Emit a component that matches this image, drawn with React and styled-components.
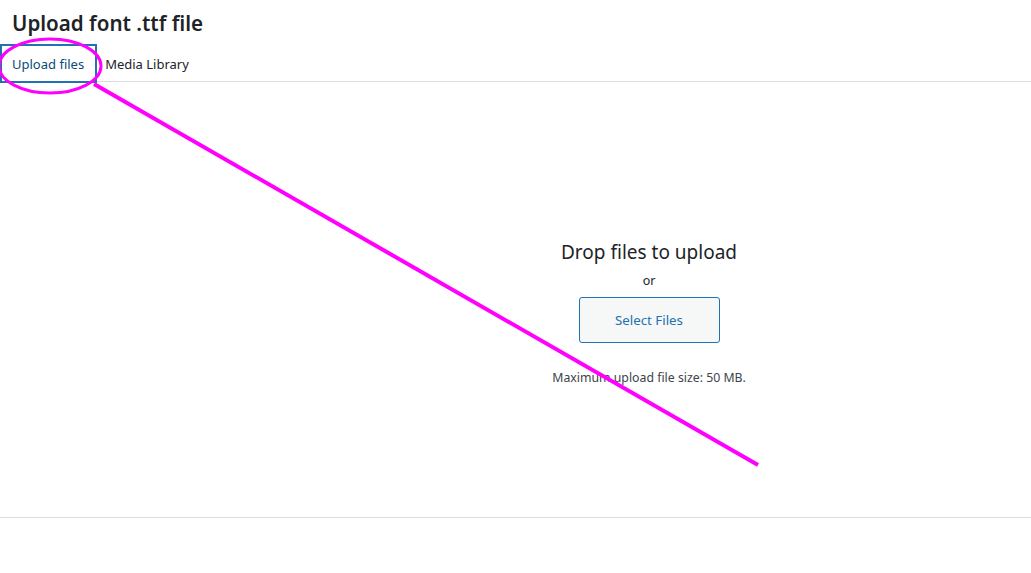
import styled, { createGlobalStyle } from "styled-components";

const Global = createGlobalStyle`
  html, body { margin: 0; padding: 0; background: #fff; }
  body { font-family: "Noto Sans", "Open Sans", sans-serif; color: #1d2327; }
`;

const Frame = styled.div`
  position: relative;
  width: 1031px;
  height: 573px;
  overflow: hidden;
  background: #fff;
`;

const Title = styled.h1`
  margin: 0;
  padding: 9px 12px 0;
  height: 35px;
  font-size: 20.6px;
  font-weight: 600;
  line-height: 28px;
  color: #1d2327;
`;

const Router = styled.nav`
  display: flex;
  align-items: flex-start;
  height: 37px;
  border-bottom: 1px solid #dcdcde;
`;

const Tab = styled.button`
  font: inherit;
  font-size: 13px;
  background: none;
  margin: 0;
  padding: 1px ${(p) => (p.$active ? "11px" : "8px")} 0 ${(p) => (p.$active ? "10px" : "6px")};
  height: 39px;
  flex-shrink: 0;
  border: ${(p) => (p.$active ? "2px solid #2271b1" : "2px solid transparent")};
  color: ${(p) => (p.$active ? "#0a4b78" : "#1d2327")};
  cursor: pointer;
`;

const Content = styled.section`
  height: 436px;
  border-bottom: 1px solid #dcdcde;
  display: flex;
  flex-direction: column;
  align-items: center;
  padding-left: 267px;
  padding-top: 156px;
  box-sizing: border-box;
`;

const Heading = styled.h2`
  margin: 0;
  font-size: 19px;
  font-weight: 400;
  line-height: 28px;
  color: #1d2327;
`;

const Or = styled.p`
  margin: 5px 0 0;
  font-size: 12.5px;
  line-height: 20px;
  color: #1d2327;
`;

const SelectButton = styled.button`
  margin-top: 6px;
  width: 141px;
  height: 46px;
  border: 1px solid #2271b1;
  border-radius: 3px;
  background: #f6f7f7;
  color: #2271b1;
  font: inherit;
  font-size: 13.3px;
`;

const MaxSize = styled.p`
  margin: 25px 0 0;
  font-size: 12.3px;
  line-height: 20px;
  color: #3c434a;
`;

const Annotation = styled.svg`
  position: absolute;
  left: 0;
  top: 0;
  pointer-events: none;
`;

export default function App() {
  return (
    <Frame>
      <Global />
      <Title>Upload font .ttf file</Title>
      <Router>
        <Tab $active>Upload files</Tab>
        <Tab>Media Library</Tab>
      </Router>
      <Content>
        <Heading>Drop files to upload</Heading>
        <Or>or</Or>
        <SelectButton>Select Files</SelectButton>
        <MaxSize>Maximum upload file size: 50 MB.</MaxSize>
      </Content>
      <Annotation width="1031" height="573">
        <ellipse cx="50" cy="66" rx="51" ry="27" fill="none" stroke="#f0f" strokeWidth="3" />
        <line x1="94" y1="84" x2="758" y2="465" stroke="#f0f" strokeWidth="4" />
      </Annotation>
    </Frame>
  );
}
